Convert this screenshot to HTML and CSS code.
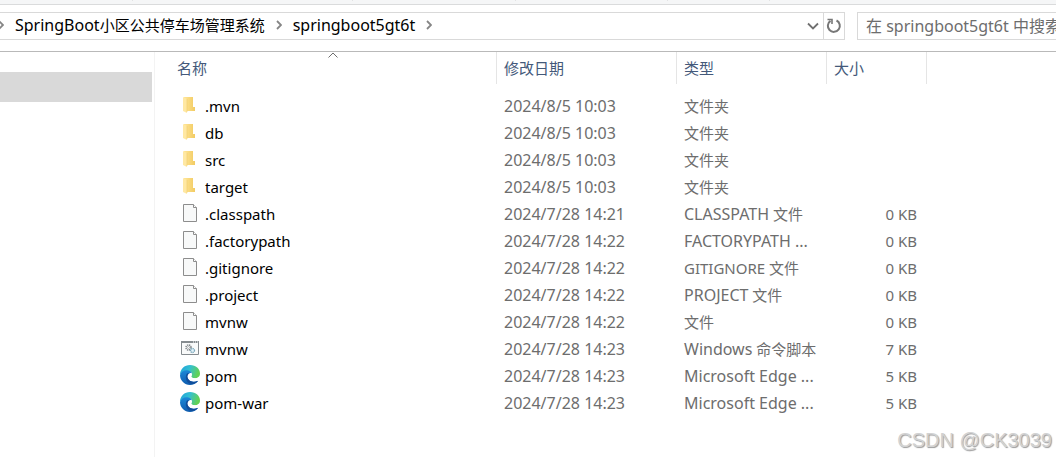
FILE: index.html
```html
<!DOCTYPE html>
<html lang="zh-CN">
<head>
  <meta charset="UTF-8">
  <meta name="viewport" content="width=device-width, initial-scale=1.0">
  <title>springboot5gt6t</title>
  <link rel="stylesheet" href="styles.css">
</head>
<body>
  <svg class="defs" width="0" height="0">
    <defs>
      <linearGradient id="folderFill" x1="0" x2="1">
        <stop offset="0" stop-color="#ffe596"/>
        <stop offset="1" stop-color="#f2cb62"/>
      </linearGradient>
      <linearGradient id="edgeGreen" x1="0" y1="0" x2="1" y2="0.3">
        <stop offset="0" stop-color="#1d9fda"/>
        <stop offset="0.5" stop-color="#33bfd2"/>
        <stop offset="1" stop-color="#62d255"/>
      </linearGradient>
      <linearGradient id="edgeBlue" x1="0" y1="0" x2="0" y2="1">
        <stop offset="0" stop-color="#1b88d8"/>
        <stop offset="1" stop-color="#0f5cae"/>
      </linearGradient>
    </defs>
    <symbol id="folder" viewBox="0 0 12 18">
      <path d="M1 1h9v10h2v4H1z" fill="url(#folderFill)"/>
      <path d="M0 1l4 2v14l-4-2z" fill="#ffe8a3"/>
      <path d="M4 3v13" stroke="#eecb6c" stroke-width=".6"/>
    </symbol>
    <symbol id="file" viewBox="0 0 14 18">
      <path d="M.5.5h10l3 3v14H.5z" fill="#f8f9f9" stroke="#8d8d8d"/>
      <path d="M10.500.5v3h3" fill="#fff" stroke="#8d8d8d"/>
    </symbol>
    <symbol id="script" viewBox="0 0 18 14">
      <path d="M.5.5h17v13H.5z" fill="#f9fafa" stroke="#858b8f"/>
      <path d="M0 0h18v2H0z" fill="#858b8f"/>
      <path d="M12 1h1M14 1h1M16 1h1" stroke="#fff"/>
      <circle cx="7.500" cy="6.500" r="2.500" fill="none" stroke="#7c8286" stroke-width="1.500" stroke-dasharray="1.300 .7"/>
      <circle cx="7.500" cy="6.500" r="1" fill="none" stroke="#8f9498" stroke-width=".6"/>
      <circle cx="11.500" cy="9.500" r="2" fill="#e3f3fa" stroke="#7faabd" stroke-width="1.300" stroke-dasharray="1.200 .5"/>
    </symbol>
    <symbol id="edge" viewBox="0 0 20 20">
      <path d="M0 10C0 4 4.500 0 10 0c6 0 10 4 10 8.500 0 3.300-2.500 4.800-5.300 4.800-2.700 0-4-1-3.200-2.200.8-1.300.5-4.300-3-5C5 5.500 1.500 7 0 10z" fill="url(#edgeGreen)"/>
      <path d="M0 10c1-3.500 4-5 7.500-4.700 2.500.2 4.300 1.700 4.500 3.700C8 8 6.500 11 8 14c1.500 3 5.500 3.500 10.200 1.700C16 18.800 13 20 10 20 4.500 20 0 15.500 0 10z" fill="url(#edgeBlue)"/>
      <path d="M7 8.500c-2 2.500-1.500 7.500 2 9.800 3 1.500 6.500.5 9.200-2.600-4.200 1.700-8 1.200-9.800-1.700C7 11.800 7.500 10 9.500 8.700 8.800 8.200 7.800 8 7 8.500z" fill="#104d9b"/>
      <path d="M11.500 7.800c.8 1.600.2 2.700-.2 3.300-.6 1.200.6 2.200 3.500 2.200 2 0 3.800-.8 4.700-2.300l-.8 4.300C14.500 17 9.800 16.300 8.300 13.500 7 10.800 8 8.200 11.500 7.800z" fill="#fff"/>
    </symbol>
    <symbol id="chevron" viewBox="0 0 6 10">
      <path d="M1 1l4 4-4 4" fill="none" stroke="#858585" stroke-width="1.800"/>
    </symbol>
  </svg>

  <div class="ribbon"><span></span><span></span><span></span><span></span><span></span></div>

  <header class="toolbar">
    <div class="address">
      <nav class="crumbs">
        <svg class="chevron"><use href="#chevron"/></svg>
        <a href="#"><span class="latin">SpringBoot</span>小区公共停车场管理系统</a>
        <svg class="chevron"><use href="#chevron"/></svg>
        <a href="#"><span class="latin">springboot5gt6t</span></a>
        <svg class="chevron"><use href="#chevron"/></svg>
      </nav>
      <button class="history" type="button" aria-label="历史记录">
        <svg width="12" height="8" viewBox="0 0 12 8"><path d="M1 1.500l5 5 5-5" fill="none" stroke="#707070" stroke-width="1.800"/></svg>
      </button>
      <button class="refresh" type="button" aria-label="刷新">
        <svg width="16" height="16" viewBox="0 0 16 16">
          <path d="M10.500 2.500a6 6 0 1 1-6 .4" fill="none" stroke="#777" stroke-width="2"/>
          <path d="M1.500 1.500H6v4.500" fill="none" stroke="#777" stroke-width="1.600"/>
        </svg>
      </button>
    </div>
    <input class="search" type="text" aria-label="搜索" placeholder="在 springboot5gt6t 中搜索">
  </header>

  <div class="explorer">
    <aside class="tree"><div class="selected"></div></aside>
    <main class="files">
      <table>
        <thead>
          <tr>
            <th class="name">名称
              <svg class="sort" width="10" height="6" viewBox="0 0 10 6"><path d="M.5 5.500L5 1l4.500 4.500" fill="none" stroke="#6d6d6d"/></svg>
            </th>
            <th class="date">修改日期</th>
            <th class="type">类型</th>
            <th class="size">大小</th>
            <th class="rest"></th>
          </tr>
        </thead>
        <tbody>
          <tr>
            <td><div class="entry"><svg class="folder"><use href="#folder"/></svg>.mvn</div></td>
            <td><span class="latin">2024/8/5 10:03</span></td><td>文件夹</td><td></td><td></td>
          </tr>
          <tr>
            <td><div class="entry"><svg class="folder"><use href="#folder"/></svg>db</div></td>
            <td><span class="latin">2024/8/5 10:03</span></td><td>文件夹</td><td></td><td></td>
          </tr>
          <tr>
            <td><div class="entry"><svg class="folder"><use href="#folder"/></svg>src</div></td>
            <td><span class="latin">2024/8/5 10:03</span></td><td>文件夹</td><td></td><td></td>
          </tr>
          <tr>
            <td><div class="entry"><svg class="folder"><use href="#folder"/></svg>target</div></td>
            <td><span class="latin">2024/8/5 10:03</span></td><td>文件夹</td><td></td><td></td>
          </tr>
          <tr>
            <td><div class="entry"><svg class="file"><use href="#file"/></svg>.classpath</div></td>
            <td><span class="latin">2024/7/28 14:21</span></td><td><span class="latin">CLASSPATH</span> 文件</td><td>0 KB</td><td></td>
          </tr>
          <tr>
            <td><div class="entry"><svg class="file"><use href="#file"/></svg>.factorypath</div></td>
            <td><span class="latin">2024/7/28 14:22</span></td><td><span class="latin">FACTORYPATH ...</span></td><td>0 KB</td><td></td>
          </tr>
          <tr>
            <td><div class="entry"><svg class="file"><use href="#file"/></svg>.gitignore</div></td>
            <td><span class="latin">2024/7/28 14:22</span></td><td>GITIGNORE 文件</td><td>0 KB</td><td></td>
          </tr>
          <tr>
            <td><div class="entry"><svg class="file"><use href="#file"/></svg>.project</div></td>
            <td><span class="latin">2024/7/28 14:22</span></td><td><span class="latin">PROJECT</span> 文件</td><td>0 KB</td><td></td>
          </tr>
          <tr>
            <td><div class="entry"><svg class="file"><use href="#file"/></svg>mvnw</div></td>
            <td><span class="latin">2024/7/28 14:22</span></td><td>文件</td><td>0 KB</td><td></td>
          </tr>
          <tr>
            <td><div class="entry"><svg class="script"><use href="#script"/></svg>mvnw</div></td>
            <td><span class="latin">2024/7/28 14:23</span></td><td><span class="latin">Windows</span> 命令脚本</td><td>7 KB</td><td></td>
          </tr>
          <tr>
            <td><div class="entry"><svg class="edge"><use href="#edge"/></svg>pom</div></td>
            <td><span class="latin">2024/7/28 14:23</span></td><td><span class="latin">Microsoft Edge ...</span></td><td>5 KB</td><td></td>
          </tr>
          <tr>
            <td><div class="entry"><svg class="edge"><use href="#edge"/></svg>pom-war</div></td>
            <td><span class="latin">2024/7/28 14:23</span></td><td><span class="latin">Microsoft Edge ...</span></td><td>5 KB</td><td></td>
          </tr>
        </tbody>
      </table>
    </main>
  </div>

  <div class="watermark">CSDN @CK3039</div>
</body>
</html>
```
FILE: styles.css
```css
* {
  box-sizing: border-box;
}
body {
  margin: 0;
  min-height: 100vh;
  display: flex;
  flex-direction: column;
  position: relative;
  overflow-x: hidden;
  background: #fff;
  font-family: "Noto Sans", "Noto Sans CJK SC", sans-serif;
  font-size: 15px;
  line-height: 20px;
  color: #000;
}
.defs {
  position: absolute;
}
.latin {
  font-size: 16px;
}
.ribbon {
  display: grid;
  grid-template-columns: 133px 220px 163px 152px 102px;
  height: 5px;
  background: #f5f6f7;
  border-bottom: 1px solid #dadbdc;
}
.ribbon span {
  height: 1px;
  border-right: 1px solid #e2e3e4;
}
.toolbar {
  display: flex;
  gap: 12px;
  padding: 7px 0 11px;
  border-bottom: 1px solid #b9b9b9;
  overflow: hidden;
}
.address {
  flex: 1;
  display: flex;
  height: 28px;
  border: 1px solid #d9d9d9;
  border-left: none;
}
.crumbs {
  flex: 1;
  display: flex;
  align-items: center;
  margin-left: -2px;
  padding-bottom: 2px;
}
.crumbs a {
  margin: 0 11px;
  color: #000;
  text-decoration: none;
}
.chevron {
  width: 6px;
  height: 10px;
}
.address button {
  display: flex;
  align-items: center;
  justify-content: center;
  width: 20px;
  padding: 0;
  border: none;
  background: none;
}
.address .refresh {
  width: 21px;
  border-left: 1px solid #d9d9d9;
}
.search {
  width: 200px;
  height: 28px;
  margin-right: -1px;
  padding: 0 0 0 8px;
  border: 1px solid #d9d9d9;
  font: inherit;
  font-size: 16px;
}
.search::placeholder {
  color: #6d6d6d;
}
.explorer {
  flex: 1;
  display: flex;
}
.tree {
  width: 155px;
  padding: 20px 2px 0 0;
  border-right: 1px solid #f3f3f3;
}
.selected {
  height: 30px;
  background: #d9d9d9;
}
.files {
  flex: 1;
  padding-left: 15px;
}
table {
  width: 100%;
  table-layout: fixed;
  border-collapse: separate;
  border-spacing: 0;
}
th {
  position: relative;
  height: 32px;
  padding: 0 7px;
  border-right: 1px solid #e5e5e5;
  text-align: left;
  font-weight: normal;
  color: #44597a;
}
.name {
  width: 327px;
}
.date {
  width: 180px;
}
.type {
  width: 150px;
}
.size {
  width: 100px;
}
.rest {
  border-right: none;
}
.sort {
  position: absolute;
  top: 0;
  left: 50%;
  margin-left: -5px;
}
tbody::before {
  content: "";
  display: block;
  height: 8px;
}
td {
  height: 27px;
  padding: 0 7px;
  color: #6d6d6d;
  white-space: nowrap;
}
td:nth-child(4) {
  padding-right: 10px;
  text-align: right;
}
.entry {
  display: flex;
  align-items: center;
  color: #000;
}
.entry svg {
  flex: none;
}
.folder {
  width: 12px;
  height: 18px;
  margin: 0 10px 2px 6px;
}
.file {
  width: 14px;
  height: 18px;
  margin: 0 8px 2px 6px;
}
.script {
  width: 18px;
  height: 14px;
  margin: 0 6px 2px 4px;
}
.edge {
  width: 20px;
  height: 20px;
  margin: 0 5px 2px 3px;
}
.watermark {
  position: absolute;
  right: 4px;
  bottom: 6px;
  font-family: "Liberation Sans", sans-serif;
  font-size: 20px;
  line-height: 22px;
  color: #d2d2d2;
  text-shadow: 1px 1px 1px #999;
}
```
